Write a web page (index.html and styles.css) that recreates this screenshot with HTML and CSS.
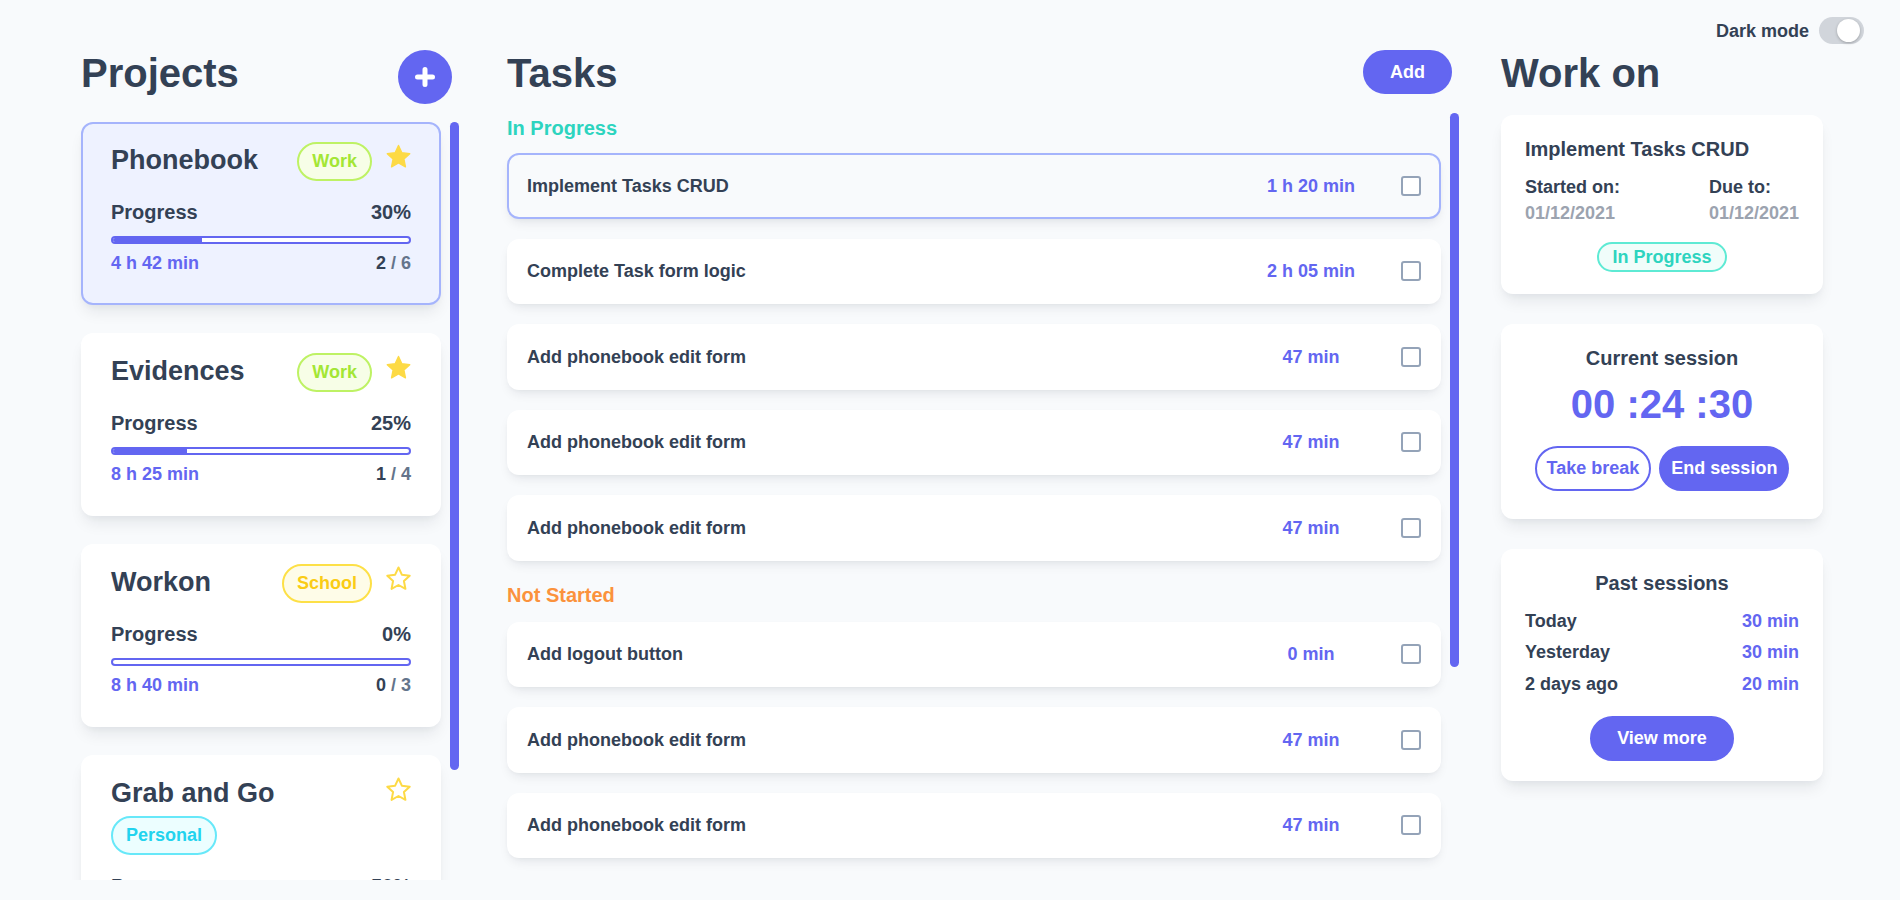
FILE: index.html
```html
<!DOCTYPE html>
<html lang="en">
<head>
<meta charset="utf-8">
<title>Workon</title>
<link rel="stylesheet" href="styles.css">
</head>
<body>
<div class="topbar">
  <span class="dm-label">Dark mode</span>
  <span class="toggle"><span class="knob"></span></span>
</div>
<main class="board">
  <section class="col col-projects">
    <header class="col-head">
      <h1>Projects</h1>
      <button class="fab" aria-label="Add project">
        <svg width="22" height="22" viewBox="0 0 22 22"><path d="M11 3.5v15M3.5 11h15" stroke="#fff" stroke-width="5" stroke-linecap="round"/></svg>
      </button>
    </header>
    <div class="list">
      <div class="scroll proj-scroll">
        <article class="proj active">
          <div class="proj-top">
            <div class="proj-titles">
              <h2>Phonebook</h2>
              <span class="tag tag-work">Work</span>
            </div>
            <svg class="star" viewBox="0 0 25 23"><polygon class="star-fill" points="12.5,0.5 15.85,7.69 23.72,8.65 17.92,14.06 19.44,21.85 12.5,18 5.56,21.85 7.08,14.06 1.28,8.65 9.15,7.69"/></svg>
          </div>
          <div class="proj-progress"><span>Progress</span><span>30%</span></div>
          <div class="bar"><div class="bar-fill" style="width:30%"></div></div>
          <div class="proj-foot"><span class="time">4 h 42 min</span><span class="count"><b>2</b> / 6</span></div>
        </article>
        <article class="proj">
          <div class="proj-top">
            <div class="proj-titles">
              <h2>Evidences</h2>
              <span class="tag tag-work">Work</span>
            </div>
            <svg class="star" viewBox="0 0 25 23"><polygon class="star-fill" points="12.5,0.5 15.85,7.69 23.72,8.65 17.92,14.06 19.44,21.85 12.5,18 5.56,21.85 7.08,14.06 1.28,8.65 9.15,7.69"/></svg>
          </div>
          <div class="proj-progress"><span>Progress</span><span>25%</span></div>
          <div class="bar"><div class="bar-fill" style="width:25%"></div></div>
          <div class="proj-foot"><span class="time">8 h 25 min</span><span class="count"><b>1</b> / 4</span></div>
        </article>
        <article class="proj">
          <div class="proj-top">
            <div class="proj-titles">
              <h2>Workon</h2>
              <span class="tag tag-school">School</span>
            </div>
            <svg class="star" viewBox="0 0 25 23"><polygon class="star-line" points="12.5,0.5 15.85,7.69 23.72,8.65 17.92,14.06 19.44,21.85 12.5,18 5.56,21.85 7.08,14.06 1.28,8.65 9.15,7.69"/></svg>
          </div>
          <div class="proj-progress"><span>Progress</span><span>0%</span></div>
          <div class="bar"><div class="bar-fill" style="width:0%"></div></div>
          <div class="proj-foot"><span class="time">8 h 40 min</span><span class="count"><b>0</b> / 3</span></div>
        </article>
        <article class="proj">
          <div class="proj-top">
            <div class="proj-titles">
              <h2>Grab and Go</h2>
              <span class="tag tag-personal">Personal</span>
            </div>
            <svg class="star" viewBox="0 0 25 23"><polygon class="star-line" points="12.5,0.5 15.85,7.69 23.72,8.65 17.92,14.06 19.44,21.85 12.5,18 5.56,21.85 7.08,14.06 1.28,8.65 9.15,7.69"/></svg>
          </div>
          <div class="proj-progress"><span>Progress</span><span>50%</span></div>
          <div class="bar"><div class="bar-fill" style="width:50%"></div></div>
          <div class="proj-foot"><span class="time">3 h 10 min</span><span class="count"><b>2</b> / 4</span></div>
        </article>
      </div>
      <div class="track"><div class="thumb thumb-proj"></div></div>
    </div>
  </section>

  <section class="col col-tasks">
    <header class="col-head">
      <h1>Tasks</h1>
      <button class="btn btn-solid btn-add">Add</button>
    </header>
    <div class="list">
      <div class="scroll tasks-scroll">
        <h3 class="section-title st-progress">In Progress</h3>
        <div class="task active"><span class="task-name">Implement Tasks CRUD</span><span class="task-time">1 h 20 min</span><span class="check"></span></div>
        <div class="task"><span class="task-name">Complete Task form logic</span><span class="task-time">2 h 05 min</span><span class="check"></span></div>
        <div class="task"><span class="task-name">Add phonebook edit form</span><span class="task-time">47 min</span><span class="check"></span></div>
        <div class="task"><span class="task-name">Add phonebook edit form</span><span class="task-time">47 min</span><span class="check"></span></div>
        <div class="task"><span class="task-name">Add phonebook edit form</span><span class="task-time">47 min</span><span class="check"></span></div>
        <h3 class="section-title st-not">Not Started</h3>
        <div class="task"><span class="task-name">Add logout button</span><span class="task-time">0 min</span><span class="check"></span></div>
        <div class="task"><span class="task-name">Add phonebook edit form</span><span class="task-time">47 min</span><span class="check"></span></div>
        <div class="task"><span class="task-name">Add phonebook edit form</span><span class="task-time">47 min</span><span class="check"></span></div>
      </div>
      <div class="track"><div class="thumb thumb-tasks"></div></div>
    </div>
  </section>

  <section class="col col-work">
    <header class="col-head work-head">
      <h1>Work on</h1>
    </header>
    <div class="wcard">
      <h4 class="wtitle">Implement Tasks CRUD</h4>
      <div class="dates">
        <div><div>Started on:</div><div class="date">01/12/2021</div></div>
        <div><div>Due to:</div><div class="date">01/12/2021</div></div>
      </div>
      <span class="status">In Progress</span>
    </div>
    <div class="wcard wcard-session">
      <h4 class="wtitle">Current session</h4>
      <div class="timer">00 :24 :30</div>
      <div class="btn-row">
        <button class="btn btn-outline">Take break</button>
        <button class="btn btn-solid">End session</button>
      </div>
    </div>
    <div class="wcard wcard-past">
      <h4 class="wtitle">Past sessions</h4>
      <ul class="past-list">
        <li><span>Today</span><span class="past-time">30 min</span></li>
        <li><span>Yesterday</span><span class="past-time">30 min</span></li>
        <li><span>2 days ago</span><span class="past-time">20 min</span></li>
      </ul>
      <div class="btn-row btn-row-past">
        <button class="btn btn-solid btn-more">View more</button>
      </div>
    </div>
  </section>
</main>
</body>
</html>
```

FILE: styles.css
```css
* {
  box-sizing: border-box;
  margin: 0;
  padding: 0;
}

html, body {
  background: #f8fafc;
}

body {
  width: 1900px;
  height: 900px;
  overflow: hidden;
  font-family: "Liberation Sans", Arial, sans-serif;
  font-weight: 700;
  color: #334155;
}

button {
  font: inherit;
  cursor: pointer;
}

/* top bar */
.topbar {
  display: flex;
  justify-content: flex-end;
  align-items: center;
  gap: 10px;
  height: 45px;
  padding: 17px 36px 1px 0;
}

.dm-label {
  font-size: 18px;
  line-height: 24px;
}

.toggle {
  display: flex;
  align-items: center;
  justify-content: flex-end;
  width: 45px;
  height: 27px;
  padding: 0 4px;
  border-radius: 14px;
  background: #d1d5db;
}

.knob {
  width: 23px;
  height: 23px;
  border-radius: 50%;
  background: #fff;
  box-shadow: 0 1px 3px rgba(0, 0, 0, 0.25);
}

/* board */
.board {
  display: flex;
  align-items: flex-start;
  padding: 5px 0 0 81px;
}

.col-projects {
  width: 378px;
}

.col-tasks {
  width: 952px;
  margin-left: 48px;
}

.col-work {
  width: 322px;
  margin-left: 42px;
}

.col-head {
  display: flex;
  justify-content: space-between;
  align-items: flex-start;
  margin-right: 7px;
}

.col-head h1 {
  font-size: 40px;
  line-height: 46px;
}

.work-head {
  margin-bottom: 19px;
}

.fab {
  display: flex;
  align-items: center;
  justify-content: center;
  width: 54px;
  height: 54px;
  border: 0;
  border-radius: 50%;
  background: #6366f1;
}

.list {
  display: flex;
  gap: 9px;
  margin-top: 18px;
}

.scroll {
  overflow: hidden;
  box-sizing: content-box;
  padding: 0 20px;
  margin: 0 -20px;
}

.track {
  width: 9px;
  flex-shrink: 0;
}

.thumb {
  width: 9px;
  border-radius: 5px;
  background: #6366f1;
}

.thumb-proj {
  height: 648px;
}

.thumb-tasks {
  height: 554px;
  margin-top: -1px;
}

/* projects */
.proj-scroll {
  display: flex;
  flex-direction: column;
  gap: 28px;
  width: 360px;
  height: 758px;
}

.proj {
  flex-shrink: 0;
  padding: 18px 28px 28px;
  border: 2px solid transparent;
  border-radius: 12px;
  background: #fff;
  box-shadow: 0 10px 15px -3px rgba(15, 23, 42, 0.08), 0 4px 6px -2px rgba(15, 23, 42, 0.04);
}

.proj.active {
  background: #eef2ff;
  border-color: #a5b4fc;
}

.proj-top {
  display: flex;
  align-items: flex-start;
  gap: 14px;
}

.proj-titles {
  flex: 1;
  display: flex;
  flex-wrap: wrap;
  justify-content: space-between;
  align-items: flex-start;
  row-gap: 5px;
  column-gap: 10px;
}

.proj-titles h2 {
  font-size: 27px;
  line-height: 36px;
}

.tag {
  display: inline-block;
  padding: 5px 13px;
  border: 2px solid;
  border-radius: 999px;
  font-size: 18px;
  line-height: 25px;
}

.tag-work {
  color: #a3e635;
  border-color: #bef264;
  background: #f7fee7;
}

.tag-school {
  color: #facc15;
  border-color: #fde047;
  background: #fefce8;
}

.tag-personal {
  color: #22d3ee;
  border-color: #67e8f9;
  background: #ecfeff;
}

.star {
  flex-shrink: 0;
  width: 25px;
  height: 23px;
  margin-top: 3px;
  overflow: visible;
}

.star-fill {
  fill: #fdda45;
  stroke: #fdda45;
  stroke-width: 1.4;
  stroke-linejoin: round;
}

.star-line {
  fill: none;
  stroke: #fdda45;
  stroke-width: 2;
  stroke-linejoin: round;
}

.proj-progress {
  display: flex;
  justify-content: space-between;
  margin-top: 17px;
  font-size: 20px;
  line-height: 28px;
}

.bar {
  height: 8px;
  margin-top: 10px;
  border: 2px solid #6366f1;
  border-radius: 999px;
  background: #fff;
  overflow: hidden;
}

.bar-fill {
  height: 100%;
  background: #6366f1;
}

.proj-foot {
  display: flex;
  justify-content: space-between;
  margin-top: 7px;
  font-size: 18px;
  line-height: 24px;
}

.time {
  color: #6366f1;
}

.count {
  color: #64748b;
}

.count b {
  color: #334155;
}

/* tasks */
.btn {
  padding: 8px 10px;
  border: 2px solid #6366f1;
  border-radius: 999px;
  font-size: 18px;
  line-height: 25px;
  white-space: nowrap;
}

.btn-solid {
  background: #6366f1;
  color: #fff;
}

.btn-outline {
  background: #fff;
  color: #6366f1;
}

.btn-add {
  padding: 7px 25px;
  line-height: 26px;
}

.tasks-scroll {
  width: 934px;
  height: 766px;
}

.section-title {
  margin-bottom: 11px;
  font-size: 20px;
  line-height: 28px;
}

.st-progress {
  color: #2dd4bf;
}

.st-not {
  margin-top: 1px;
  margin-bottom: 13px;
  color: #fb923c;
}

.task {
  display: flex;
  align-items: center;
  height: 65.5px;
  margin-bottom: 20px;
  padding: 0 18px;
  border: 2px solid transparent;
  border-radius: 12px;
  background: #fff;
  box-shadow: 0 6px 12px -3px rgba(15, 23, 42, 0.09), 0 2px 5px -2px rgba(15, 23, 42, 0.05);
  font-size: 18px;
  line-height: 24px;
}

.task.active {
  background: #f8fafc;
  border-color: #a5b4fc;
}

.task-name {
  flex: 1;
}

.task-time {
  width: 140px;
  margin-right: 20px;
  text-align: center;
  color: #6366f1;
}

.check {
  width: 20px;
  height: 20px;
  border: 2px solid #94a3b8;
  border-radius: 3px;
  background: #fff;
}

/* work on */
.wcard {
  padding: 20px 24px 22px;
  border-radius: 12px;
  background: #fff;
  box-shadow: 0 10px 15px -3px rgba(15, 23, 42, 0.08), 0 4px 6px -2px rgba(15, 23, 42, 0.04);
}

.wcard + .wcard {
  margin-top: 30px;
}

.wtitle {
  font-size: 20px;
  line-height: 28px;
}

.dates {
  display: flex;
  justify-content: space-between;
  margin-top: 11px;
  font-size: 18px;
  line-height: 26px;
}

.date {
  color: #9ca3af;
}

.status {
  display: block;
  width: fit-content;
  margin: 16px auto 0;
  padding: 0 13px;
  border: 2px solid #5eead4;
  border-radius: 999px;
  background: #f0fdfa;
  color: #2dd4bf;
  font-size: 18px;
  line-height: 26px;
}

.wcard-session {
  padding-bottom: 28px;
  text-align: center;
}

.timer {
  margin-top: 9px;
  color: #6366f1;
  font-size: 40px;
  line-height: 46px;
}

.btn-row {
  display: flex;
  justify-content: center;
  gap: 8px;
  margin-top: 19px;
}

.wcard-past {
  padding-bottom: 20px;
}

.wcard-past .wtitle {
  text-align: center;
}

.past-list {
  list-style: none;
  margin-top: 9px;
  font-size: 18px;
  line-height: 31.3px;
}

.past-list li {
  display: flex;
  justify-content: space-between;
}

.past-time {
  color: #6366f1;
}

.btn-row-past {
  margin-top: 16px;
}

.btn-more {
  padding: 8px 25px;
}
```
